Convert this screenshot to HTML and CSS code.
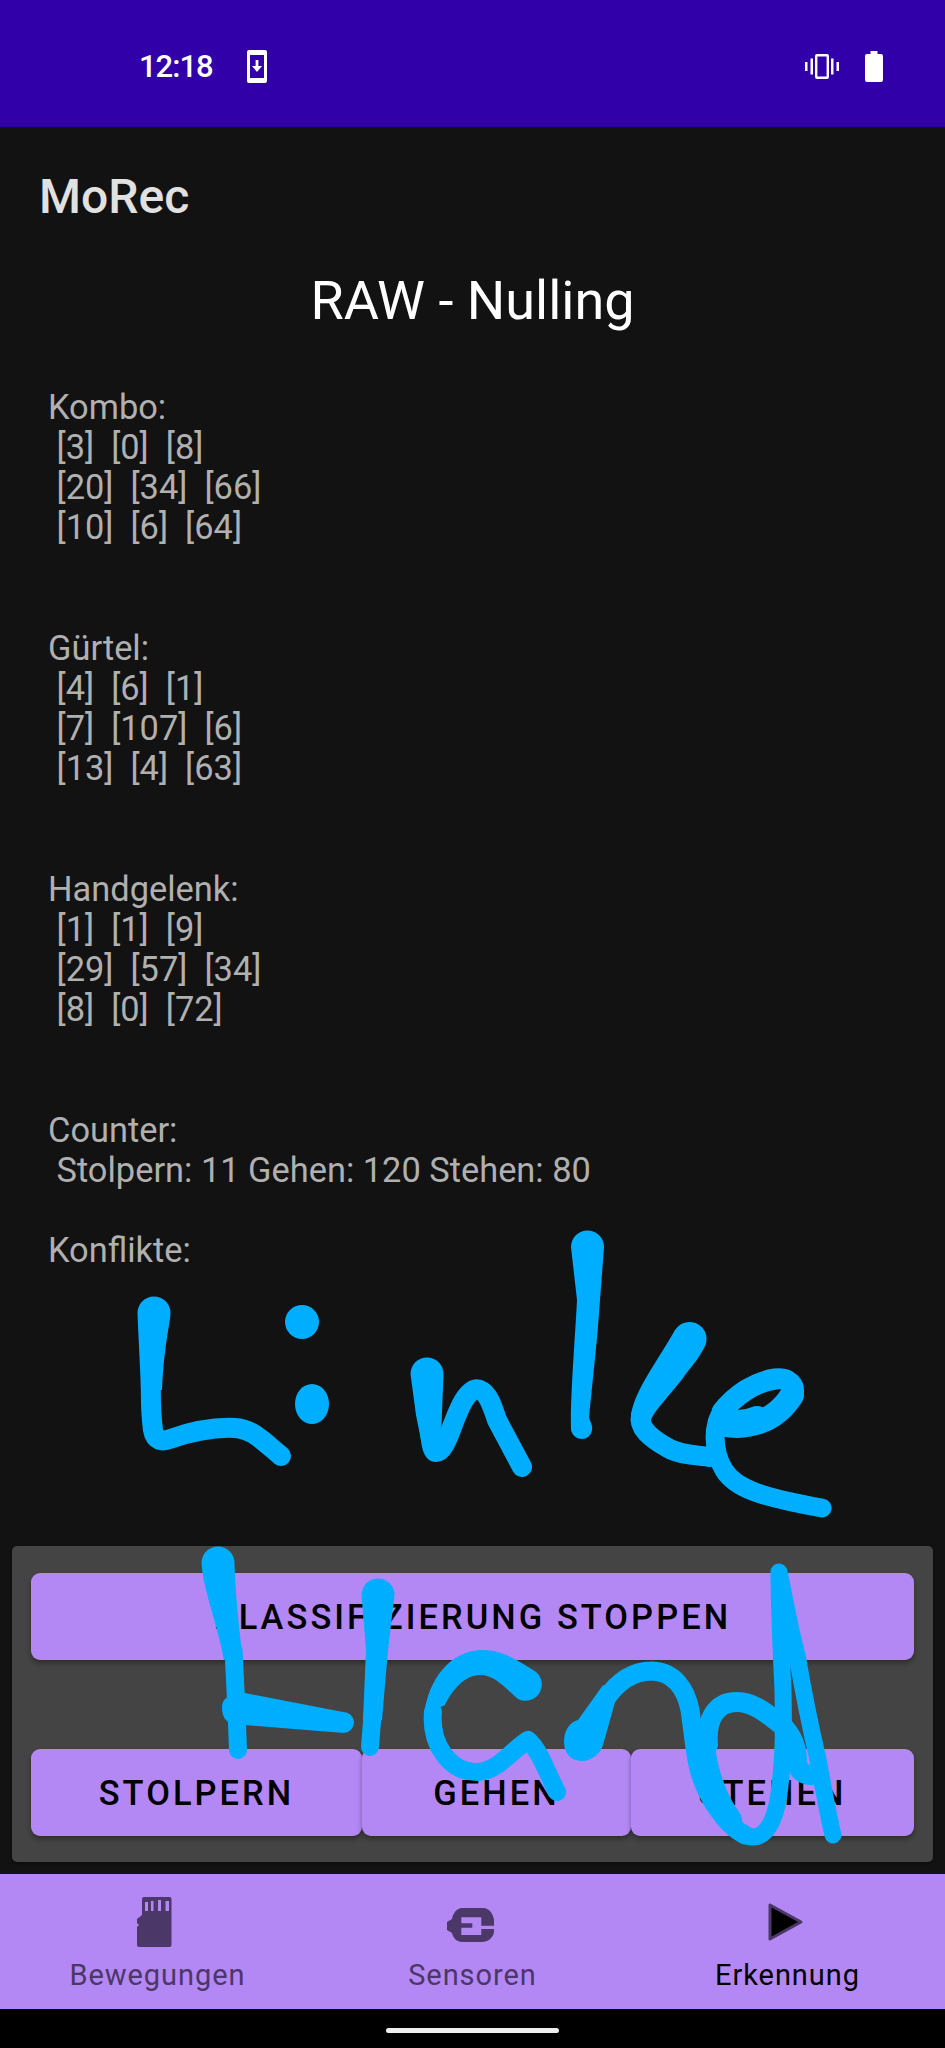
FILE: index.html
```html
<!DOCTYPE html>
<html lang="en">

<head>
    <meta charset="UTF-8">
    <meta name="viewport" content="width=device-width, initial-scale=1.0">
    <title>MoRec</title>

    <link rel="stylesheet" href="styles.css">

</head>

<body>
    <div class="status-bar">
        <span class="clock">12:18</span>
        <svg class="icon-download" viewBox="0 0 20 33">
            <path fill="#fff" fill-rule="evenodd" d="M2 0H18A2 2 0 0 1 20 2V31A2 2 0 0 1 18 33H2A2 2 0 0 1 0 31V2A2 2 0 0 1 2 0ZM3 5V28H17V5ZM8.6 10H11.4V16H15L10 22L5 16H8.6Z"/>
        </svg>
        <span class="spacer"></span>
        <svg class="icon-vibrate" viewBox="0 0 34 25">
            <path fill="#fff" fill-rule="evenodd" d="M12 0H22A2 2 0 0 1 24 2V23A2 2 0 0 1 22 25H12A2 2 0 0 1 10 23V2A2 2 0 0 1 12 0ZM12.4 2.4V22.6H21.6V2.4Z"/>
            <path fill="#fff" d="M5.5 4.5H8V20.5H5.5ZM26 4.5H28.5V20.5H26ZM0 8H2.5V17H0ZM31.5 8H34V17H31.5Z"/>
        </svg>
        <svg class="icon-battery" viewBox="0 0 18 31">
            <path fill="#fff" d="M5.5 0H12.5V3H16A2 2 0 0 1 18 5V29A2 2 0 0 1 16 31H2A2 2 0 0 1 0 29V5A2 2 0 0 1 2 3H5.5Z"/>
        </svg>
    </div>

    <main class="content">
        <h2 class="app-name">MoRec</h2>
        <h1 class="mode-title">RAW - Nulling</h1>
        <div class="readout">Kombo:
 [3]  [0]  [8]
 [20]  [34]  [66]
 [10]  [6]  [64]


Gürtel:
 [4]  [6]  [1]
 [7]  [107]  [6]
 [13]  [4]  [63]


Handgelenk:
 [1]  [1]  [9]
 [29]  [57]  [34]
 [8]  [0]  [72]


Counter:
 Stolpern: 11 Gehen: 120 Stehen: 80

Konflikte:</div>
    </main>

    <section class="controls">
        <button class="btn">KLASSIFIZIERUNG STOPPEN</button>
        <div class="btn-row">
            <button class="btn">STOLPERN</button>
            <button class="btn">GEHEN</button>
            <button class="btn">STEHEN</button>
        </div>
    </section>

    <nav class="bottom-nav">
        <div class="nav-item">
            <svg class="nav-icon" viewBox="0 0 80 75">
                <path fill="#4b3768" fill-rule="evenodd" d="M26 12H51.5A2 2 0 0 1 53.5 14V60A2 2 0 0 1 51.5 62H21A2 2 0 0 1 19 60V42L21 40L19 38V34L24 30V14A2 2 0 0 1 26 12ZM27 17V26H30V17ZM33 16V26H35.5V16ZM40 15V26H43V15ZM47.5 16V26H51V16Z"/>
            </svg>
            <span class="nav-label">Bewegungen</span>
        </div>
        <div class="nav-item">
            <svg class="nav-icon" viewBox="0 0 80 75">
                <path fill="#4b3768" d="M29 23H50C56 23 60 28 61 35V40.700H48.300V32.300H28.300V38.300H39.300V42.700H28.300V50H48.300V44H61V47C60 53 55 57 49 57H29C24 57 20 53 19 48L14 45V37L19 34C20 28 24 23 29 23Z"/>
            </svg>
            <span class="nav-label">Sensoren</span>
        </div>
        <div class="nav-item active">
            <svg class="nav-icon" viewBox="0 0 80 75">
                <path fill="#000" stroke="#4b3768" stroke-width="3" stroke-linejoin="round" d="M22 20V54L53 37Z"/>
            </svg>
            <span class="nav-label">Erkennung</span>
        </div>
    </nav>

    <div class="gesture-bar"><span class="gesture-pill"></span></div>

    <!-- handwritten note drawn on top of the screenshot: filled pen tips, stroked lines -->
    <svg class="scribble" viewBox="0 0 945 2048">
        <g fill="#00aeff">
            <ellipse cx="302" cy="1322" rx="17" ry="17"/>
            <ellipse cx="312" cy="1404" rx="17" ry="20"/>
            <path d="M137.500 1313A16.500 16.500 0 0 1 170.500 1313C170 1325 164 1345 162 1390H141C140 1360 138 1330 137.500 1313Z"/>
            <path d="M410.500 1374A16.500 16.500 0 0 1 443.500 1374L441.500 1425L440 1440H421L416 1415Z"/>
            <path d="M571 1247A16.500 16.500 0 0 1 604 1247L597.500 1333L589 1417C590 1422 593 1425 592 1430C590 1442 574 1442 571 1430C570 1400 575 1340 577 1300Z"/>
            <path d="M675 1330A16 16 0 0 1 704 1348C698 1360 690 1368 683 1378C670 1395 655 1410 651 1420L631 1415C635 1390 655 1365 675 1330Z"/>
            <path d="M201.500 1563A16.500 16.500 0 0 1 234.500 1563C235 1585 238 1620 243 1660H224C218 1625 203 1590 201.500 1563Z"/>
            <path d="M361.500 1595A16.500 16.500 0 0 1 394.500 1595L388 1650L382 1720H363L366 1650Z"/>
            <path d="M245 1693L343 1712A10.500 10.500 0 0 1 344 1733L245 1725H236C226 1724 222 1716 222 1708C222 1700 226 1696 234 1696Z"/>
            <path d="M533 1670A15.500 15.500 0 0 1 518 1699C505 1688 495 1675 480 1675C465 1675 452 1690 445 1705L424 1715C428 1680 450 1650 483 1650C503 1650 518 1661 533 1670Z"/>
            <path d="M564 1742C564 1730 570 1722 578 1720L603 1685L617 1695L603 1745C600 1755 590 1761 582 1761C570 1761 564 1752 564 1742Z"/>
        </g>
        <g fill="none" stroke="#00aeff" stroke-linecap="round" stroke-linejoin="round">
            <!-- Linke -->
            <path stroke-width="20" d="M151 1380C150.500 1400 151 1415 153 1430C155 1441 162 1442 170 1439C190 1432 215 1427 235 1428C252 1429 262 1440 281 1456"/>
            <path stroke-width="20" d="M430 1430C431 1445 433 1452 436 1452C445 1452 450 1430 458 1412C465 1395 473 1387 480 1390C488 1393 492 1405 497 1420L522 1467"/>
            <path stroke-width="20" d="M641 1415C638 1428 650 1438 668 1448C680 1455 695 1455 710 1457"/>
            <path stroke-width="28" d="M722 1422C735 1425 748 1424 757 1420"/>
            <path stroke-width="24" d="M745 1424C765 1425 783 1410 792 1395"/>
            <path stroke-width="21" d="M792 1398C797 1385 788 1377 775 1379C755 1382 735 1395 722 1412"/>
            <path stroke-width="19" d="M722 1412C713 1425 712 1450 724 1470C735 1488 760 1497 822 1508"/>
            <!-- Hand -->
            <path stroke-width="18" d="M233.500 1650L236.500 1710L238 1750"/>
            <path stroke-width="18" d="M372.500 1715L370 1747"/>
            <path stroke-width="18" d="M433 1712C430 1745 450 1772 477 1772C497 1772 512 1750 528 1740C540 1750 548 1775 557 1792"/>
            <path stroke-width="19" d="M605 1700C615 1685 630 1671 652 1671C675 1672 686 1690 690 1710C693 1730 694 1745 698 1765C705 1795 725 1825 745 1835"/>
            <path stroke-width="20" d="M708 1745C706 1720 715 1702 737 1702C752 1702 765 1712 775 1720C790 1730 797 1745 797 1762C798 1770 803 1775 812 1775"/>
            <path stroke-width="24" d="M703 1745C705 1770 715 1800 730 1820"/>
            <path stroke-width="17" d="M722 1810C735 1830 745 1837 753 1837C770 1837 778 1810 780 1785C783 1760 784 1740 783 1690C781 1650 779 1610 779 1572C785 1600 790 1630 797 1655C803 1690 810 1725 817 1755C823 1785 828 1815 833 1835"/>
        </g>
    </svg>
</body>
</html>
```

FILE: styles.css
```css
body {
    margin: 0;
    width: 945px;
    height: 2048px;
    position: relative;
    overflow: hidden;
    display: flex;
    flex-direction: column;
    background-color: #121212;
    font-family: 'Roboto', sans-serif;
}

.status-bar {
    height: 127px;
    flex-shrink: 0;
    display: flex;
    align-items: center;
    box-sizing: border-box;
    padding: 6px 62px 0 139px;
    background-color: #3200a8;
    color: white;
}

.clock {
    font-size: 31px;
    font-weight: 500;
    letter-spacing: -1px;
    line-height: 40px;
    width: 108px;
}

.icon-download {
    width: 20px;
    height: 33px;
}

.spacer {
    flex: 1;
}

.icon-vibrate {
    width: 34px;
    height: 25px;
    margin-right: 26px;
}

.icon-battery {
    width: 18px;
    height: 31px;
}

.content {
    flex: 1;
    min-height: 0;
    display: flex;
    flex-direction: column;
}

.app-name {
    margin: 0;
    padding: 43px 0 0 39px;
    font-size: 48px;
    font-weight: 500;
    line-height: 54px;
    color: #e1e1e1;
}

.mode-title {
    margin: 0;
    padding-top: 45px;
    font-size: 54px;
    font-weight: 400;
    line-height: 64px;
    color: white;
    text-align: center;
}

.readout {
    margin: 54px 0 0 48px;
    font-size: 34.4px;
    line-height: 40.15px;
    color: #b0b0b0;
    white-space: pre;
}

.controls {
    flex-shrink: 0;
    margin: 0 12px 12px;
    padding: 27px 19px 26px;
    display: flex;
    flex-direction: column;
    gap: 89px;
    border-radius: 5px;
    background-color: #444444;
    box-shadow: 0 1px 3px rgba(0, 0, 0, 0.5);
}

.btn-row {
    display: grid;
    grid-template-columns: 331fr 269fr 283fr;
}

.btn {
    height: 87px;
    padding: 0;
    border: none;
    border-radius: 9px;
    background-color: #b388f5;
    color: black;
    font-family: inherit;
    font-size: 34.4px;
    font-weight: 500;
    letter-spacing: 3.07px;
    box-shadow: 0 3px 5px rgba(0, 0, 0, 0.35);
}

.bottom-nav {
    height: 135px;
    flex-shrink: 0;
    display: grid;
    grid-template-columns: repeat(3, 1fr);
    background-color: #b388f5;
}

.nav-item {
    display: flex;
    flex-direction: column;
    align-items: center;
    color: #4b3768;
}

.nav-item.active {
    color: black;
}

.nav-icon {
    width: 80px;
    height: 75px;
    margin-top: 11px;
}

.nav-label {
    font-size: 29px;
    line-height: 32px;
    letter-spacing: 0.95px;
    margin-top: -1px;
}

.gesture-bar {
    height: 39px;
    flex-shrink: 0;
    display: flex;
    justify-content: center;
    background-color: black;
}

.gesture-pill {
    width: 173px;
    height: 5px;
    margin-top: 19px;
    border-radius: 3px;
    background-color: #eeeeee;
}

.scribble {
    position: absolute;
    top: 0;
    left: 0;
    width: 945px;
    height: 2048px;
}
```
